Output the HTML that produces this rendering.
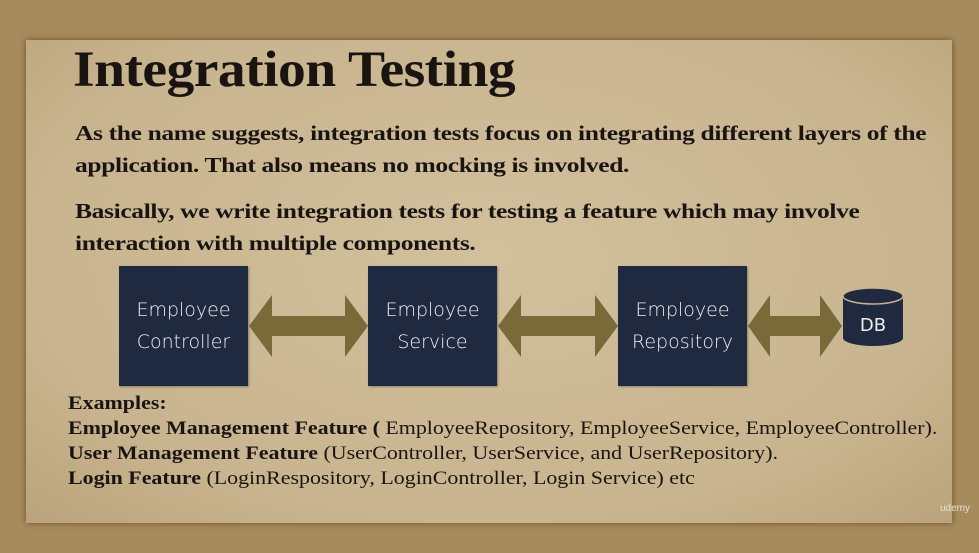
<!DOCTYPE html>
<html><head><style>
html,body{margin:0;padding:0}
body{width:979px;height:553px;background:#a88b5d;position:relative;overflow:hidden;font-family:"Liberation Serif",serif;color:#1a1410}
.paper{position:absolute;left:26px;top:40px;width:926px;height:483px;background:radial-gradient(ellipse at 50% 45%,#d2c09d 0%,#c8b48e 70%,#bba47b 100%);box-shadow:0 0 6px rgba(60,40,10,.6)}
.t{position:absolute;white-space:nowrap;transform-origin:0 0}
h1{position:absolute;left:73px;top:41px;margin:0;font-size:51px;font-weight:bold;letter-spacing:-0.5px;transform:scaleX(1.09);transform-origin:0 0}
.b{font-weight:bold;font-size:21px;letter-spacing:-0.3px;transform:scaleX(1.215)}
.box{position:absolute;top:266px;width:129px;height:120px;background:#1f2a40;color:#eee;font-family:"DejaVu Sans",sans-serif;font-size:19px;text-align:center;display:flex;align-items:center;justify-content:center;line-height:32px;font-weight:200;box-shadow:1px 1px 2px rgba(0,0,0,.3)}
.ex{font-size:18.5px;transform:scaleX(1.185)}
</style></head><body>
<div class="paper"></div>
<h1>Integration Testing</h1>
<div class="t b" style="left:75px;top:121px">As the name suggests, integration tests focus on integrating different layers of the</div>
<div class="t b" style="left:75px;top:153px">application. That also means no mocking is involved.</div>
<div class="t b" style="left:75px;top:199px">Basically, we write integration tests for testing a feature which may involve</div>
<div class="t b" style="left:75px;top:231px">interaction with multiple components.</div>
<div class="box" style="left:119px">Employee<br>Controller</div>
<div class="box" style="left:368px">Employee<br>Service</div>
<div class="box" style="left:618px">Employee<br>Repository</div>
<svg style="position:absolute;left:0;top:0" width="979" height="553">
<g fill="#7a6939">
<polygon points="249,326 272,295 272,316 345,316 345,295 368,326 345,357 345,336 272,336 272,357"/>
<polygon points="498,326 521,295 521,316 595,316 595,295 618,326 595,357 595,336 521,336 521,357"/>
<polygon points="748,326 770,295 770,316 820,316 820,295 842,326 820,357 820,336 770,336 770,357"/>
</g>
<path d="M843,296 L843,338 A30,8 0 0 0 903,338 L903,296 Z" fill="#1f2a40"/>
<ellipse cx="873" cy="296" rx="30" ry="8" fill="#1f2a40" stroke="#c8b48e" stroke-width="1.5"/>
<text x="873" y="331" fill="#eee" font-family="DejaVu Sans" font-size="18" text-anchor="middle">DB</text>
</svg>
<div class="t ex" style="left:68px;top:394px;font-weight:bold">Examples:</div>
<div class="t ex" style="left:68px;top:419px"><b>Employee Management Feature (</b> EmployeeRepository, EmployeeService, EmployeeController).</div>
<div class="t ex" style="left:68px;top:444px"><b>User Management Feature</b> (UserController, UserService, and UserRepository).</div>
<div class="t ex" style="left:68px;top:469px"><b>Login Feature</b> (LoginRespository, LoginController, Login Service) etc</div>
<div class="t" style="left:940px;top:503px;font-size:10px;color:#e8e0d0;font-family:'Liberation Sans',sans-serif">udemy</div>
</body></html>
